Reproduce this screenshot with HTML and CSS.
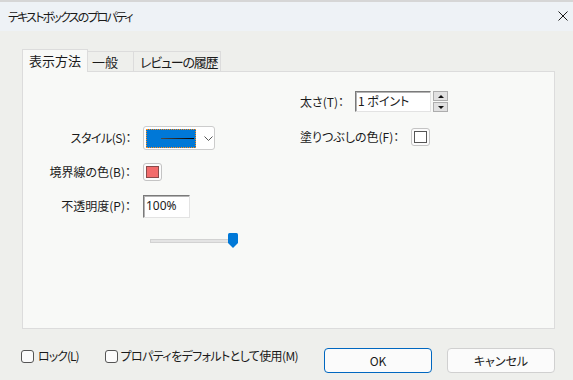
FILE: index.html
```html
<!DOCTYPE html>
<html lang="ja">
  <head>
    <meta charset="UTF-8" />
    <title>テキストボックスのプロパティ</title>
    <link rel="stylesheet" href="styles.css">
  </head>
  <body>
    <div class="edge"></div>

    <header class="titlebar">
      <span class="title">テキストボックスのプロパティ</span>
      <svg class="close" width="10" height="10" viewBox="0 0 10 10">
        <path d="M0.5 0.5 L9.5 9.5 M9.5 0.5 L0.5 9.5" stroke="#1a1a1a" stroke-width="1" fill="none" />
      </svg>
    </header>

    <main class="content">
      <nav class="tabs">
        <div class="tab active">表示方法</div>
        <div class="tab t2">一般</div>
        <div class="tab t3">レビューの履歴</div>
      </nav>

      <section class="panel">
        <div class="left">
          <label class="kana">スタイル(S)：</label>
          <div class="style-select">
            <div class="style-box"><span class="line"></span></div>
            <svg class="chev" width="9" height="5" viewBox="0 0 9 5">
              <path d="M0.5 0.5 L4.5 4.5 L8.5 0.5" stroke="#555" fill="none" />
            </svg>
          </div>

          <label>境界線の色(B)：</label>
          <div class="swatch"><span class="fill red"></span></div>

          <label>不透明度(P)：</label>
          <div class="edit opacity">100%</div>

          <span></span>
          <div class="slider">
            <div class="track"></div>
            <svg class="thumb" width="10" height="15" viewBox="0 0 10 15">
              <path d="M0 1.5 Q0 0 1.5 0 H8.5 Q10 0 10 1.5 V10 L5 15 L0 10 Z" fill="#0078d7" />
            </svg>
          </div>
        </div>

        <div class="right">
          <div class="row">
            <label>太さ(T)：</label>
            <div class="spin-group">
              <div class="edit weight">1 ポイント</div>
              <div class="spin">
                <div class="spin-btn up"></div>
                <div class="spin-btn down"></div>
              </div>
            </div>
          </div>
          <div class="row">
            <label>塗りつぶしの色(F)：</label>
            <div class="swatch"><span class="fill white"></span></div>
          </div>
        </div>
      </section>
    </main>

    <footer class="footer">
      <div class="check lock"><span class="box"></span>ロック(L)</div>
      <div class="check second"><span class="box"></span>プロパティをデフォルトとして使用(M)</div>
      <div class="buttons">
        <button class="btn primary">OK</button>
        <button class="btn">キャンセル</button>
      </div>
    </footer>
  </body>
</html>
```

FILE: styles.css
```css
body {
  margin: 0;
  width: 573px;
  height: 380px;
  overflow: hidden;
  background-color: #eeefec;
  color: #1a1a1a;
  font-family: "Noto Sans CJK JP", "Noto Sans", sans-serif;
  font-feature-settings: "palt";
  font-size: 12px;
  line-height: 14px;
}

.edge {
  height: 2px;
  background-color: #d6d6d6;
}

.titlebar {
  height: 29px;
  background-color: #eef2f6;
  display: flex;
  align-items: center;
  justify-content: space-between;
  padding: 0 5px 0 8px;
  font-size: 12px;
}

.title {
  letter-spacing: -1.8px;
}

.close {
  margin-top: -1px;
}

.content {
  padding-left: 22px;
}

.tabs {
  display: flex;
  align-items: flex-end;
  height: 22px;
  margin-top: 18px;
}

.tab {
  box-sizing: border-box;
  height: 20px;
  border: 1px solid #dcdcdc;
  border-bottom: none;
  border-left: none;
  font-size: 13px;
  line-height: 19px;
  text-align: center;
  color: #1a1a1a;
}

.tab.active {
  position: relative;
  z-index: 1;
  width: 66px;
  height: 23px;
  margin-bottom: -1px;
  border-left: 1px solid #dcdcdc;
  background-color: #f8f9f7;
  line-height: 21px;
}

.t2 {
  width: 46px;
  text-align: left;
  padding-left: 4px;
}

.t3 {
  width: 87px;
  text-align: left;
  padding-left: 6px;
  letter-spacing: -1.2px;
}

.panel {
  box-sizing: border-box;
  width: 533px;
  height: 258px;
  border: 1px solid #dcdcdc;
  background-color: #f8f9f7;
  display: grid;
  grid-template-columns: 275px 1fr;
}

.left {
  margin-top: 49px;
  display: grid;
  grid-template-columns: 108px auto;
  grid-auto-rows: 34px;
  column-gap: 12px;
  align-items: center;
  align-content: start;
  justify-items: start;
}

.left label {
  justify-self: end;
}

.kana {
  letter-spacing: -0.5px;
}

.style-select {
  box-sizing: border-box;
  width: 72px;
  height: 24px;
  border: 1px solid #cccccc;
  border-radius: 3px;
  background-color: #ffffff;
  display: flex;
  align-items: center;
  padding-left: 2px;
}

.style-box {
  box-sizing: border-box;
  width: 50px;
  height: 19px;
  background-color: #0078d7;
  border: 1px dotted #ff8c1a;
  display: flex;
  align-items: center;
  justify-content: flex-end;
  padding-right: 1px;
}

.line {
  width: 33px;
  height: 1px;
  background: linear-gradient(to right, #4a4a4a, #000000);
}

.chev {
  margin-left: 8px;
}

.swatch {
  box-sizing: border-box;
  width: 19px;
  height: 18px;
  border: 1px solid #c4c4c4;
  border-radius: 3px;
  background-color: #fbfbfb;
  display: flex;
  align-items: center;
  justify-content: center;
}

.fill {
  box-sizing: border-box;
  width: 13px;
  height: 12px;
}

.red {
  background-color: #f26b6b;
  border: 1px solid #8a4a4a;
}

.white {
  background-color: #ffffff;
  border: 1px solid #555555;
}

.edit {
  box-sizing: border-box;
  background-color: #ffffff;
  border: 1px solid;
  border-color: #7a7a7a #e3e3e3 #e3e3e3 #7a7a7a;
  box-shadow: inset 1px 1px 0 #b4b4b4;
  padding: 2px 0 0 2px;
  font-family: "Noto Sans", "Noto Sans CJK JP", sans-serif;
}

.opacity {
  width: 47px;
  height: 23px;
  padding-top: 3px;
}

.slider {
  display: flex;
  align-items: center;
  margin-left: 7px;
  margin-top: 1px;
}

.track {
  box-sizing: border-box;
  width: 80px;
  height: 4px;
  background-color: #e4e4e4;
  border: 1px solid #d2d2d2;
}

.thumb {
  margin-left: -2px;
}

.right {
  margin-top: 12px;
  padding-left: 2px;
}

.row {
  height: 35px;
  display: flex;
  align-items: center;
  gap: 11px;
}

.row + .row {
  gap: 12px;
}

.spin-group {
  display: flex;
  gap: 2px;
}

.weight {
  width: 76px;
  height: 21px;
  font-family: "Noto Sans CJK JP", sans-serif;
}

.spin {
  display: flex;
  flex-direction: column;
  gap: 1px;
}

.spin-btn {
  box-sizing: border-box;
  width: 15px;
  height: 10px;
  background-color: #e1e1e1;
  border: 1px solid #adadad;
  display: flex;
  align-items: center;
  justify-content: center;
}

.spin-btn::after {
  content: "";
  border-left: 3px solid transparent;
  border-right: 3px solid transparent;
}

.up::after {
  border-bottom: 3px solid #111111;
}

.down::after {
  border-top: 3px solid #111111;
}

.footer {
  display: flex;
  align-items: flex-start;
  margin-top: 19px;
  padding: 0 18px 0 21px;
}

.check {
  display: flex;
  align-items: center;
  gap: 4px;
  margin-top: 1px;
  height: 14px;
}

.lock {
  letter-spacing: -1px;
}

.second {
  margin-left: 26px;
  gap: 3px;
  letter-spacing: -0.6px;
}

.box {
  box-sizing: border-box;
  width: 13px;
  height: 13px;
  border: 1px solid #555555;
  border-radius: 3px;
  background-color: #fbfbfb;
}

.buttons {
  margin-left: auto;
  display: flex;
  gap: 15px;
}

.btn {
  box-sizing: border-box;
  width: 108px;
  height: 25px;
  border: 1px solid #d0d0d0;
  border-radius: 4px;
  background-color: #fbfbfb;
  font-family: "Noto Sans CJK JP", "Noto Sans", sans-serif;
  font-feature-settings: "palt";
  font-size: 12px;
  color: #1a1a1a;
  padding: 0;
}

.btn.primary {
  border-color: #0067c0;
}
```
